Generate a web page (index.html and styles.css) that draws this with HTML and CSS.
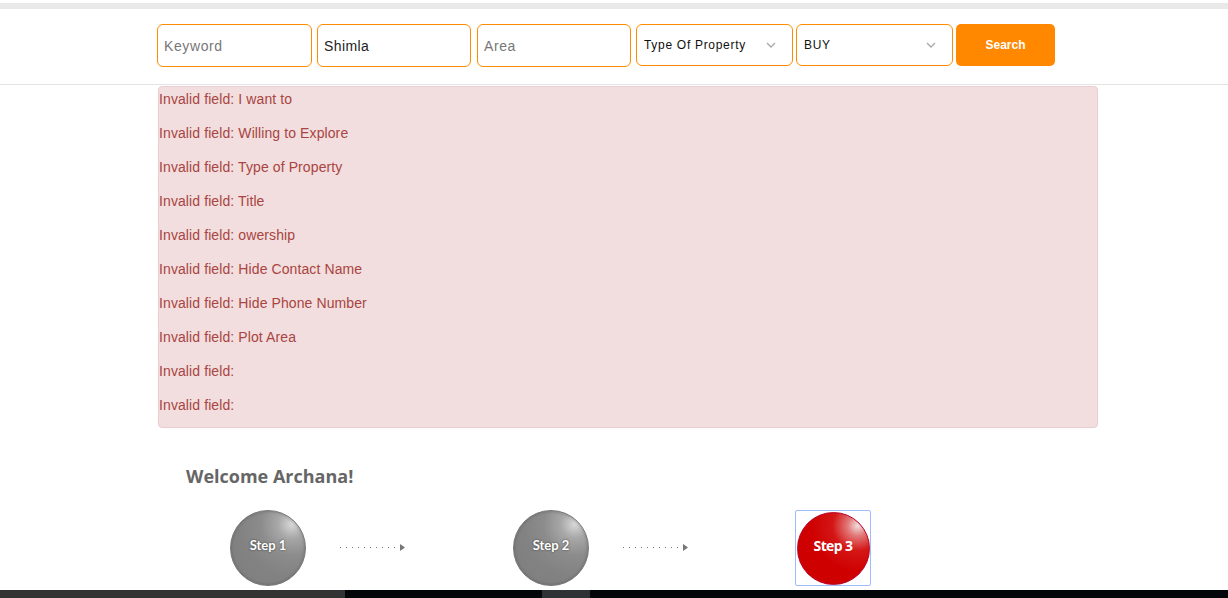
FILE: index.html
```html
<!DOCTYPE html>
<html>
<head>
<meta charset="utf-8">
<link rel="stylesheet" href="styles.css">
</head>
<body>
<div class="topband"></div>
<header class="header">
  <div class="searchbar">
    <div class="field w155"><span class="ph">Keyword</span></div>
    <div class="field w154 g5"><span class="val">Shimla</span></div>
    <div class="field w154 g6"><span class="ph">Area</span></div>
    <div class="field sel w157 g5"><span class="selval">Type Of Property</span>
      <svg class="chev" width="10" height="6" viewBox="0 0 10 6"><path d="M1 1 L5 5 L9 1" fill="none" stroke="#aaa" stroke-width="1.4"/></svg>
    </div>
    <div class="field sel w157 g3"><span class="selval">BUY</span>
      <svg class="chev" width="10" height="6" viewBox="0 0 10 6"><path d="M1 1 L5 5 L9 1" fill="none" stroke="#aaa" stroke-width="1.4"/></svg>
    </div>
    <button class="search g3">Search</button>
  </div>
</header>
<div class="alert">
  <p>Invalid field: I want to</p>
  <p>Invalid field: Willing to Explore</p>
  <p>Invalid field: Type of Property</p>
  <p>Invalid field: Title</p>
  <p>Invalid field: owership</p>
  <p>Invalid field: Hide Contact Name</p>
  <p>Invalid field: Hide Phone Number</p>
  <p>Invalid field: Plot Area</p>
  <p>Invalid field: </p>
  <p>Invalid field: </p>
</div>
<section class="steps">
  <h2 class="welcome">Welcome Archana!</h2>
  <div class="steprow">
    <div class="circle grey first"><span>Step 1</span></div>
    <svg class="arrow" width="65" height="10" viewBox="0 0 65 10">
      <g fill="#777"><rect x="0" y="4" width="1" height="1"/><rect x="6" y="4" width="1" height="1"/><rect x="12" y="4" width="1" height="1"/><rect x="18" y="4" width="1" height="1"/><rect x="24" y="4" width="1" height="1"/><rect x="30" y="4" width="1" height="1"/><rect x="36" y="4" width="1" height="1"/><rect x="42" y="4" width="1" height="1"/><rect x="48" y="4" width="1" height="1"/><rect x="54" y="4" width="1" height="1"/><path d="M60 1 L65 4.5 L60 8 Z"/></g>
    </svg>
    <div class="circle grey mid"><span>Step 2</span></div>
    <svg class="arrow" width="65" height="10" viewBox="0 0 65 10">
      <g fill="#777"><rect x="0" y="4" width="1" height="1"/><rect x="6" y="4" width="1" height="1"/><rect x="12" y="4" width="1" height="1"/><rect x="18" y="4" width="1" height="1"/><rect x="24" y="4" width="1" height="1"/><rect x="30" y="4" width="1" height="1"/><rect x="36" y="4" width="1" height="1"/><rect x="42" y="4" width="1" height="1"/><rect x="48" y="4" width="1" height="1"/><rect x="54" y="4" width="1" height="1"/><path d="M60 1 L65 4.5 L60 8 Z"/></g>
    </svg>
    <div class="focusbox last"><div class="circle red"><span>Step 3</span></div></div>
  </div>
</section>
<div class="bottombar">
  <div class="bb1"></div><div class="bb2"></div><div class="bb3"></div><div class="bb4"></div>
</div>
</body>
</html>
```

FILE: styles.css
```css
html, body {
  margin: 0;
  padding: 0;
  background: #fff;
  font-family: "Liberation Sans", Arial, sans-serif;
  overflow: hidden;
  height: 598px;
}
.topband {
  margin-top: 3px;
  height: 6px;
  background: #e9e9e9;
}
.header {
  height: 76px;
  border-bottom: 1px solid #e4e4e4;
  box-sizing: border-box;
  padding-top: 15px;
}
.searchbar {
  display: flex;
  padding-left: 157px;
  align-items: flex-start;
}
.field {
  height: 43px;
  box-sizing: border-box;
  border: 1px solid #ff8c00;
  border-radius: 6px;
  display: flex;
  align-items: center;
  padding-left: 6px;
  background: #fff;
}
.sel {
  height: 42px;
  padding-left: 7px;
  padding-right: 16px;
  justify-content: space-between;
}
.w155 { width: 155px; }
.w154 { width: 154px; }
.w157 { width: 157px; }
.g3 { margin-left: 3px; }
.g5 { margin-left: 5px; }
.g6 { margin-left: 6px; }
.ph {
  font-size: 14px;
  color: #777;
  letter-spacing: 0.6px;
}
.val {
  font-size: 14px;
  color: #222;
  letter-spacing: 0.4px;
}
.selval {
  font-size: 12px;
  color: #111;
  letter-spacing: 0.7px;
  margin-top: -1px;
}
.search {
  width: 99px;
  height: 42px;
  border: none;
  border-radius: 5px;
  background: #ff8800;
  color: #fff;
  font-family: "Liberation Sans", Arial, sans-serif;
  font-size: 12px;
  font-weight: bold;
  padding: 0 0 1px 0;
}
.alert {
  margin: 1px 0 0 158px;
  width: 940px;
  box-sizing: border-box;
  height: 342px;
  background: #f2dede;
  border: 1px solid #ebccd1;
  border-radius: 4px;
  color: #a94442;
  padding-top: 2px;
}
.alert p {
  margin: 0 0 14px 0;
  font-size: 14px;
  line-height: 20px;
  letter-spacing: 0.1px;
}
.steps {
  padding-left: 186px;
}
.welcome {
  margin: 36px 0 0 0;
  font-family: "Open Sans", sans-serif;
  font-weight: bold;
  font-size: 18px;
  line-height: 24px;
  color: #666;
}
.steprow {
  display: flex;
  align-items: center;
  margin-top: 22px;
  height: 76px;
}
.circle {
  width: 76px;
  height: 76px;
  border-radius: 50%;
  box-sizing: border-box;
  display: flex;
  align-items: center;
  justify-content: center;
  flex-shrink: 0;
}
.circle span {
  margin-top: -7px;
}
.grey {
  border: 1px solid #777;
  background: radial-gradient(circle at 82% 18%, #d8d8d8 0%, #a8a8a8 16%, #8c8c8c 36%, #828282 60%, #7e7e7e 100%);
  box-shadow: inset 0 0 3px rgba(0,0,0,0.25);
  color: #fff;
  font-family: Lato, sans-serif;
  font-weight: bold;
  font-size: 13px;
  text-shadow: 0 0 2px #333;
}
.first { margin-left: 44px; }
.mid { margin-left: 108px; }
.last { margin-left: 107px; }
.arrow { margin-left: 34px; margin-top: -1px; }
.focusbox {
  width: 76px;
  height: 76px;
  box-sizing: border-box;
  border: 1.5px solid #9fbcfa;
  border-radius: 2px;
  display: flex;
  align-items: center;
  justify-content: center;
}
.red {
  width: 73px;
  height: 73px;
  border: 1px solid #b8002a;
  background: radial-gradient(circle at 84% 18%, #f2dede 0%, #e27a7a 12%, #d41616 30%, #cf0000 55%, #cc0000 100%);
  color: #fff;
  font-family: "Open Sans", sans-serif;
  font-weight: bold;
  font-size: 14px;
  letter-spacing: -0.6px;
}
.red span { margin-top: -5px; }
.bottombar {
  margin-top: 4px;
  height: 8px;
  display: flex;
}
.bb1 { width: 345px; background: #333; }
.bb2 { width: 197px; background: #02050a; }
.bb3 { width: 48px; background: #2e3135; }
.bb4 { flex: 1; background: #02050a; }
```
